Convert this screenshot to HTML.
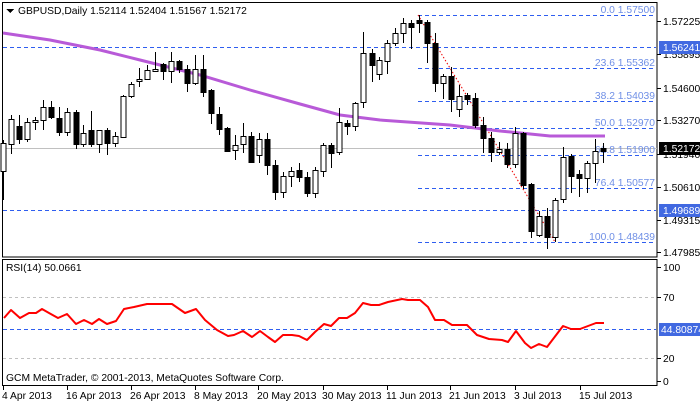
<!DOCTYPE html>
<html><head><meta charset="utf-8"><style>
html,body{margin:0;padding:0;background:#fff;width:700px;height:402px;overflow:hidden}
svg{display:block}
text{font-family:"Liberation Sans",sans-serif;font-size:10.3px}
</style></head><body>
<svg width="700" height="402" viewBox="0 0 700 402" xmlns="http://www.w3.org/2000/svg" shape-rendering="crispEdges">
<rect x="0" y="0" width="700" height="402" fill="#fff"/>
<rect x="2.5" y="2.5" width="654.5" height="254.5" fill="none" stroke="#000"/>
<line x1="3" y1="148.5" x2="657" y2="148.5" stroke="#c0c0c0"/>
<g stroke="#2f5ef0" stroke-dasharray="4,3">
<line x1="3" y1="47.5" x2="656" y2="47.5"/>
<line x1="3" y1="210.5" x2="656" y2="210.5"/>
<line x1="418" y1="15.5" x2="656" y2="15.5"/>
<line x1="418" y1="68.5" x2="656" y2="68.5"/>
<line x1="418" y1="101.5" x2="656" y2="101.5"/>
<line x1="418" y1="128.5" x2="656" y2="128.5"/>
<line x1="418" y1="155.5" x2="656" y2="155.5"/>
<line x1="418" y1="188.5" x2="656" y2="188.5"/>
<line x1="418" y1="242.5" x2="656" y2="242.5"/>
</g>
<g fill="#6f8fe6" text-anchor="end">
<text x="655" y="13">0.0 1.57500</text>
<text x="655" y="66">23.6 1.55362</text>
<text x="655" y="99">38.2 1.54039</text>
<text x="655" y="126">50.0 1.52970</text>
<text x="655" y="153">61.8 1.51900</text>
<text x="655" y="186">76.4 1.50577</text>
<text x="655" y="240">100.0 1.48439</text>
</g>
<line x1="418" y1="15" x2="555" y2="242" stroke="#e00" stroke-dasharray="1.5,2" shape-rendering="auto"/>
<polyline fill="none" stroke="#b85ad8" stroke-width="3" shape-rendering="auto" points="3,33 50,40 100,50 140,60 200,75 250,90 300,104 340,115 380,120 450,125 500,131 550,136 605,136"/>
<g stroke="#000">
<path d="M3.5 140V200M11.5 115V154M19.5 115V144M27.5 118V142M35.5 117V130M43.5 100V130M51.5 101V119M59.5 107V136M67.5 108V136M76.5 110V149M83.5 125V147M91.5 111V147M99.5 130V153M107.5 128V155M115.5 132V147M123.5 95V138M131.5 82V98M139.5 68V87M147.5 65V80M155.5 52V72M163.5 63V80M171.5 52V83M179.5 60V73M187.5 65V92M195.5 55V85M203.5 55V97M211.5 89V124M219.5 107V135M227.5 127V152M235.5 135V160M243.5 123V153M251.5 132V163M259.5 133V163M267.5 133V175M275.5 160V200M283.5 172V198M291.5 167V187M299.5 163V182M307.5 172V197M315.5 167V198M323.5 143V177M331.5 143V168M339.5 108V155M347.5 120V135M355.5 102V131M363.5 32V108M372.5 49V82M379.5 57V80M387.5 40V74M395.5 28V46M403.5 18V43M411.5 20V49M419.5 15V33M427.5 20V63M435.5 33V92M443.5 74V99M451.5 67V112M459.5 85V117M467.5 93V105M475.5 93V128M483.5 117V153M491.5 132V162M499.5 142V155M507.5 143V168M515.5 127V168M523.5 132V189M531.5 183V238M539.5 211V237M547.5 208V249M555.5 198V242M563.5 147V203M571.5 154V193M579.5 170V197M587.5 161V193M595.5 139V183M603.5 143V163"/>
</g>
<g stroke="#000">
<g fill="#fff">
<rect x="1" y="143.5" width="5" height="28"/>
<rect x="9" y="119.5" width="5" height="25"/>
<rect x="25" y="122.5" width="5" height="17"/>
<rect x="33" y="120.5" width="5" height="2"/>
<rect x="41" y="107.5" width="5" height="13"/>
<rect x="65" y="112.5" width="5" height="20"/>
<rect x="81" y="133.5" width="5" height="11"/>
<rect x="97" y="130.5" width="5" height="14"/>
<rect x="113" y="136.5" width="5" height="7"/>
<rect x="121" y="96.5" width="5" height="41"/>
<rect x="129" y="84.5" width="5" height="12"/>
<rect x="137" y="79.5" width="5" height="2"/>
<rect x="145" y="70.5" width="5" height="9"/>
<rect x="153" y="69.5" width="5" height="2"/>
<rect x="169" y="61.5" width="5" height="10"/>
<rect x="193" y="69.5" width="5" height="14"/>
<rect x="233" y="145.5" width="5" height="5"/>
<rect x="241" y="136.5" width="5" height="8"/>
<rect x="257" y="139.5" width="5" height="16"/>
<rect x="281" y="176.5" width="5" height="16"/>
<rect x="289" y="171.5" width="5" height="5"/>
<rect x="313" y="170.5" width="5" height="23"/>
<rect x="321" y="145.5" width="5" height="26"/>
<rect x="337" y="122.5" width="5" height="30"/>
<rect x="353" y="103.5" width="5" height="23"/>
<rect x="361" y="53.5" width="5" height="49"/>
<rect x="377" y="60.5" width="5" height="14"/>
<rect x="385" y="43.5" width="5" height="18"/>
<rect x="393" y="33.5" width="5" height="10"/>
<rect x="401" y="23.5" width="5" height="10"/>
<rect x="441" y="76.5" width="5" height="7"/>
<rect x="457" y="96.5" width="5" height="13"/>
<rect x="497" y="149.5" width="5" height="3"/>
<rect x="513" y="133.5" width="5" height="31"/>
<rect x="537" y="216.5" width="5" height="19"/>
<rect x="553" y="200.5" width="5" height="37"/>
<rect x="561" y="157.5" width="5" height="42"/>
<rect x="585" y="163.5" width="5" height="15"/>
<rect x="593" y="151.5" width="5" height="12"/>
</g>
<g fill="#000">
<rect x="17" y="126.5" width="5" height="13"/>
<rect x="49" y="107.5" width="5" height="10"/>
<rect x="57" y="118.5" width="5" height="14"/>
<rect x="74" y="112.5" width="5" height="32"/>
<rect x="89" y="130.5" width="5" height="14"/>
<rect x="105" y="130.5" width="5" height="13"/>
<rect x="161" y="64.5" width="5" height="7"/>
<rect x="177" y="61.5" width="5" height="8"/>
<rect x="185" y="69.5" width="5" height="14"/>
<rect x="201" y="69.5" width="5" height="23"/>
<rect x="209" y="90.5" width="5" height="23"/>
<rect x="217" y="114.5" width="5" height="15"/>
<rect x="225" y="128.5" width="5" height="23"/>
<rect x="249" y="136.5" width="5" height="26"/>
<rect x="265" y="139.5" width="5" height="26"/>
<rect x="273" y="165.5" width="5" height="27"/>
<rect x="297" y="170.5" width="5" height="7"/>
<rect x="305" y="177.5" width="5" height="16"/>
<rect x="329" y="145.5" width="5" height="8"/>
<rect x="345" y="123.5" width="5" height="3"/>
<rect x="370" y="53.5" width="5" height="12"/>
<rect x="409" y="23.5" width="5" height="4"/>
<rect x="417" y="20.5" width="5" height="3"/>
<rect x="425" y="22.5" width="5" height="21"/>
<rect x="433" y="43.5" width="5" height="40"/>
<rect x="449" y="76.5" width="5" height="23"/>
<rect x="465" y="95.5" width="5" height="4"/>
<rect x="473" y="98.5" width="5" height="27"/>
<rect x="481" y="125.5" width="5" height="13"/>
<rect x="489" y="138.5" width="5" height="14"/>
<rect x="505" y="149.5" width="5" height="15"/>
<rect x="521" y="133.5" width="5" height="52"/>
<rect x="529" y="184.5" width="5" height="47"/>
<rect x="545" y="216.5" width="5" height="21"/>
<rect x="569" y="156.5" width="5" height="20"/>
<rect x="577" y="174.5" width="5" height="4"/>
<rect x="601" y="148.5" width="5" height="3"/>
</g>
</g>
<path d="M6 9h8l-4 4z" fill="#000"/>
<text x="18" y="14" fill="#000">GBPUSD,Daily  1.52114 1.52404 1.51567 1.52172</text>
<g stroke="#000">
<path d="M657 21.5h4M657 54.5h4M657 88.5h4M657 120.5h4M657 154.5h4M657 187.5h4M657 220.5h4M657 252.5h4"/>
</g>
<g fill="#000">
<text x="663" y="25">1.57225</text>
<text x="663" y="58">1.55895</text>
<text x="663" y="92">1.54600</text>
<text x="663" y="124">1.53270</text>
<text x="663" y="158">1.51940</text>
<text x="663" y="191">1.50610</text>
<text x="663" y="224">1.49315</text>
<text x="663" y="256">1.47985</text>
</g>
<rect x="659" y="41" width="41" height="13" fill="#4169e1"/>
<text x="663" y="51" fill="#fff">1.56241</text>
<rect x="659" y="142" width="41" height="13" fill="#000"/>
<text x="663" y="152" fill="#fff">1.52172</text>
<rect x="659" y="204" width="41" height="13" fill="#4169e1"/>
<text x="663" y="214" fill="#fff">1.49689</text>
<rect x="2.5" y="259.5" width="654.5" height="126" fill="none" stroke="#000"/>
<g stroke="#c0c0c0" stroke-dasharray="3,3">
<line x1="3" y1="297.5" x2="656" y2="297.5"/>
<line x1="3" y1="358.5" x2="656" y2="358.5"/>
</g>
<line x1="3" y1="329.5" x2="656" y2="329.5" stroke="#2f5ef0" stroke-dasharray="4,3"/>
<polyline fill="none" stroke="#f00" stroke-width="2" shape-rendering="auto" stroke-linejoin="round" points="4,318 11,310 20,318 29,313 36,313 42,309 49,313 58,318 67,314 76,324 84,320 92,324 99,319 107,324 116,321 124,309 134,307 147,304 161,304 172,304 185,313 196,309 205,320 217,330 228,336 234,335 243,331 252,337 260,331 268,337 275,342 283,335 292,335 299,336 307,340 315,332 324,324 331,326 339,318 347,318 355,313 363,303 371,305 379,305 388,302 402,299 408,300 420,300 428,307 435,320 444,320 452,325 467,325 477,335 489,339 502,340 508,342 516,331 525,343 531,348 539,344 547,347 563,326 571,329 580,329 588,326 596,323 604,323"/>
<text x="6" y="271" fill="#000">RSI(14) 50.0661</text>
<text x="6" y="381" fill="#000">GCM MetaTrader, © 2001-2013, MetaQuotes Software Corp.</text>
<g fill="#000">
<text x="663" y="271">100</text>
<text x="663" y="301">70</text>
<text x="663" y="362">20</text>
<text x="663" y="385">0</text>
</g>
<g stroke="#000"><path d="M657 267.5h4M657 297.5h4M657 358.5h4M657 381.5h4"/></g>
<rect x="659" y="323" width="41" height="13" fill="#4169e1"/>
<text x="661" y="333" fill="#fff">44.80874</text>
<g stroke="#000"><path d="M3.5 386v4M67.5 386v4M131.5 386v4M195.5 386v4M258.5 386v4M323.5 386v4M387.5 386v4M450.5 386v4M515.5 386v4M580.5 386v4"/></g>
<g fill="#000">
<text x="2" y="399">4 Apr 2013</text>
<text x="66" y="399">16 Apr 2013</text>
<text x="130" y="399">26 Apr 2013</text>
<text x="194" y="399">8 May 2013</text>
<text x="257" y="399">20 May 2013</text>
<text x="322" y="399">30 May 2013</text>
<text x="386" y="399">11 Jun 2013</text>
<text x="449" y="399">21 Jun 2013</text>
<text x="514" y="399">3 Jul 2013</text>
<text x="579" y="399">15 Jul 2013</text>
</g>
</svg>
</body></html>
